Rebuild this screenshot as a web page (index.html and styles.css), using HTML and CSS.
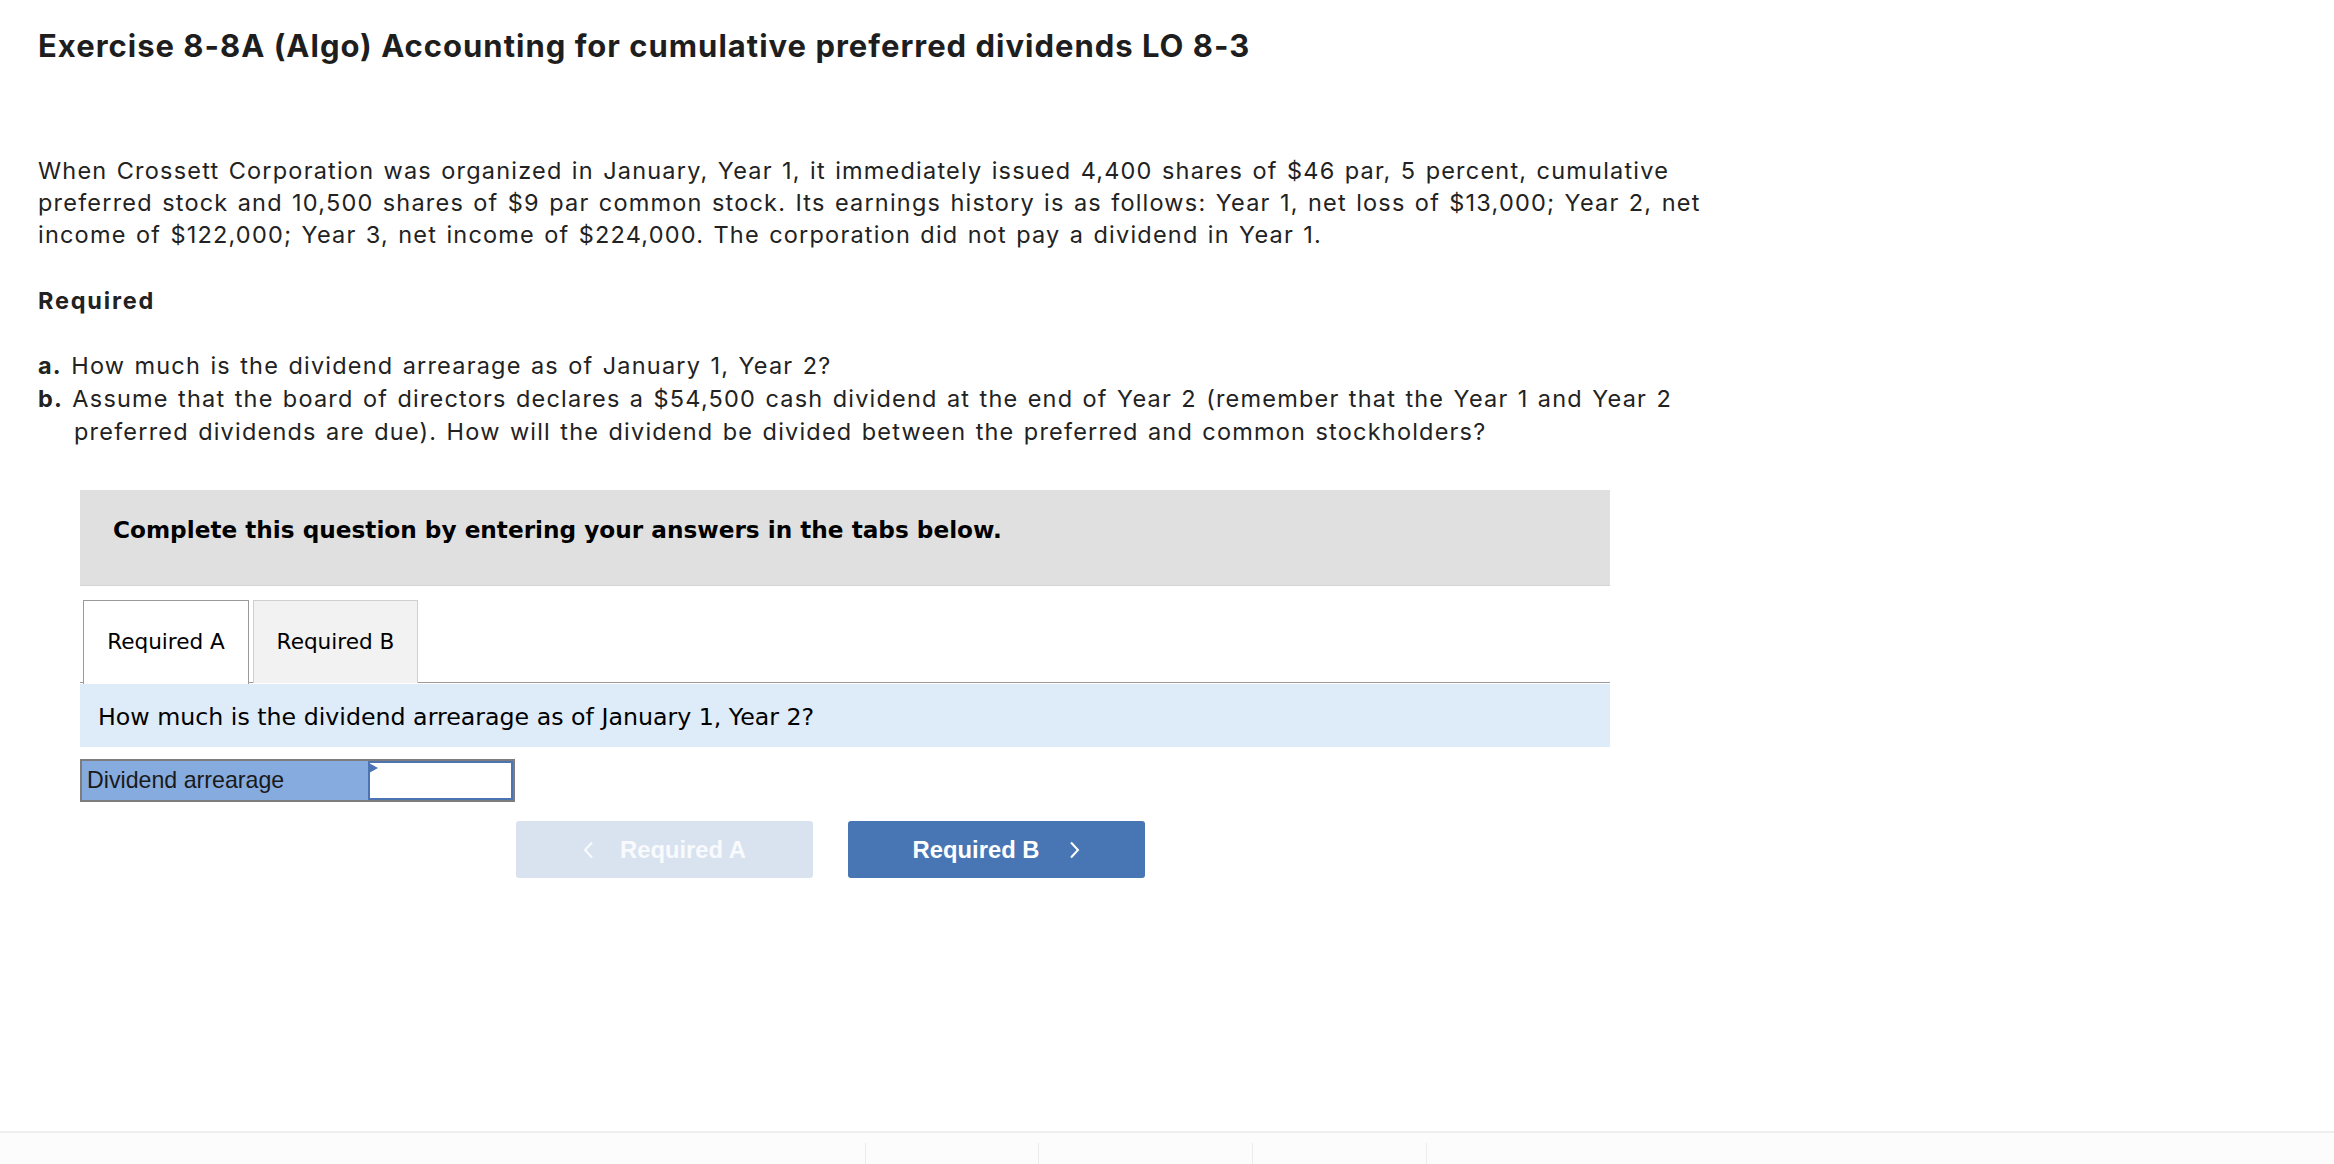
FILE: index.html
```html
<!DOCTYPE html>
<html lang="en">
<head>
<meta charset="utf-8">
<title>Exercise 8-8A (Algo)</title>
<link rel="stylesheet" href="styles.css">
</head>
<body>
<main class="page">
  <h1 class="title">Exercise 8-8A (Algo) Accounting for cumulative preferred dividends LO 8-3</h1>
  <p class="intro">When Crossett Corporation was organized in January, Year 1, it immediately issued 4,400 shares of $46 par, 5 percent, cumulative<br>preferred stock and 10,500 shares of $9 par common stock. Its earnings history is as follows: Year 1, net loss of $13,000; Year 2, net<br>income of $122,000; Year 3, net income of $224,000. The corporation did not pay a dividend in Year 1.</p>
  <h2 class="req-head">Required</h2>
  <ol class="req-list">
    <li><b>a.</b> How much is the dividend arrearage as of January 1, Year 2?</li>
    <li><b>b.</b> Assume that the board of directors declares a $54,500 cash dividend at the end of Year 2 (remember that the Year 1 and Year 2<br>preferred dividends are due). How will the dividend be divided between the preferred and common stockholders?</li>
  </ol>

  <section class="widget">
    <div class="instructions">Complete this question by entering your answers in the tabs below.</div>
    <div class="tabs">
      <div class="tab tab-active">Required A</div>
      <div class="tab tab-idle">Required B</div>
    </div>
    <div class="prompt">How much is the dividend arrearage as of January 1, Year 2?</div>
    <div class="answer-row">
      <div class="answer-label">Dividend arrearage</div>
      <div class="answer-input"><span class="flag"></span></div>
    </div>
    <div class="nav-buttons">
      <button class="nav-btn nav-prev" type="button">
        <svg class="chev" width="11" height="18" viewBox="0 0 11 18"><polyline points="9,1.5 2,9 9,16.5" fill="none" stroke="currentColor" stroke-width="2"/></svg>
        <span>Required A</span>
      </button>
      <button class="nav-btn nav-next" type="button">
        <span>Required B</span>
        <svg class="chev" width="11" height="18" viewBox="0 0 11 18"><polyline points="2,1.5 9,9 2,16.5" fill="none" stroke="currentColor" stroke-width="2"/></svg>
      </button>
    </div>
  </section>
</main>
<footer class="footer">
  <div class="footer-nav">
    <span class="footer-item w1"></span>
    <span class="footer-item w2"></span>
    <span class="footer-item w3"></span>
  </div>
</footer>
</body>
</html>
```

FILE: styles.css
```css
html, body {
  margin: 0;
  padding: 0;
  background: #ffffff;
}
body {
  min-height: 100vh;
  display: flex;
  flex-direction: column;
  font-family: Inter, "Open Sans", Arial, sans-serif;
  color: #222222;
}
.page {
  flex: 1;
  padding: 0 38px;
}
.title {
  margin: 26px 0 0;
  font-size: 31px;
  line-height: 40px;
  font-weight: 700;
  color: #1e1e1e;
  letter-spacing: 1px;
}
.intro {
  margin: 89px 0 0;
  font-size: 23.5px;
  line-height: 32px;
  letter-spacing: 1.2px;
  word-spacing: 1.5px;
}
.req-head {
  margin: 34px 0 0;
  font-size: 23.5px;
  line-height: 32px;
  font-weight: 700;
  letter-spacing: 1.8px;
}
.req-list {
  list-style: none;
  margin: 32px 0 0;
  padding: 0 0 0 36px;
  font-size: 23.5px;
  line-height: 33px;
  letter-spacing: 1.2px;
  word-spacing: 1.5px;
}
.req-list li {
  text-indent: -36px;
}
.widget {
  margin: 42px 0 0 42px;
  width: 1530px;
  font-family: "DejaVu Sans", Verdana, sans-serif;
  color: #000;
}
.instructions {
  background: #e0e0e0;
  height: 96px;
  box-sizing: border-box;
  padding: 22px 0 0 33px;
  font-size: 23.2px;
  font-weight: 700;
  line-height: 36px;
  border-bottom: 1px solid #d4d4d4;
}
.tabs {
  display: flex;
  gap: 4px;
  margin-top: 14px;
  padding-left: 3px;
  border-bottom: 1px solid #9a9a9a;
  height: 83px;
  box-sizing: border-box;
}
.tab {
  width: 166px;
  box-sizing: border-box;
  padding-top: 26px;
  text-align: center;
  font-size: 21.6px;
  line-height: 30px;
}
.tab-active {
  background: #fff;
  border: 1px solid #9a9a9a;
  border-bottom: none;
  height: 84px;
}
.tab-idle {
  background: #f2f2f2;
  border: 1px solid #cfcfcf;
  border-bottom: none;
  width: 165px;
  height: 83px;
}
.prompt {
  margin-top: 1px;
  background: #deebf8;
  height: 63px;
  box-sizing: border-box;
  padding: 18px 0 0 18px;
  font-size: 23.7px;
  line-height: 30px;
}
.answer-row {
  display: flex;
  margin-top: 12px;
  width: 435px;
  height: 43px;
  box-sizing: border-box;
  border: 2px solid #7d7d7d;
}
.answer-label {
  width: 286px;
  background: #86abdf;
  font-family: "Liberation Sans", Arial, sans-serif;
  font-size: 23.2px;
  line-height: 39px;
  padding-left: 5px;
  box-sizing: border-box;
  color: #1a1a1a;
}
.answer-input {
  position: relative;
  flex: 1;
  background: #fff;
  border: 2px solid #4d74b2;
}
.flag {
  position: absolute;
  left: -1px;
  top: 0;
  width: 0;
  height: 0;
  border-top: 5px solid transparent;
  border-bottom: 5px solid transparent;
  border-left: 9px solid #4d74b2;
}
.nav-buttons {
  display: flex;
  gap: 35px;
  margin-top: 19px;
  padding-left: 436px;
}
.nav-btn {
  width: 297px;
  height: 57px;
  border: none;
  border-radius: 3px;
  display: flex;
  align-items: center;
  justify-content: center;
  gap: 26px;
  font-family: "Liberation Sans", Arial, sans-serif;
  font-weight: 700;
  font-size: 23.8px;
  color: #ffffff;
  padding: 0;
}
.nav-prev {
  background: #d9e3ef;
  color: #f8fafd;
}
.nav-next {
  background: #4875b3;
  gap: 30px;
}
.chev {
  display: block;
}
.footer {
  height: 33px;
  box-sizing: border-box;
  border-top: 2px solid #eeeeee;
  background: #fcfcfc;
}
.footer-nav {
  display: flex;
  margin-left: 865px;
  padding-top: 10px;
  height: 100%;
  box-sizing: border-box;
}
.footer-item {
  display: block;
  border-left: 1px solid #ececec;
}
.footer-item.w1 { width: 172px; }
.footer-item.w2 { width: 213px; }
.footer-item.w3 { width: 173px; border-right: 1px solid #ececec; }
```
